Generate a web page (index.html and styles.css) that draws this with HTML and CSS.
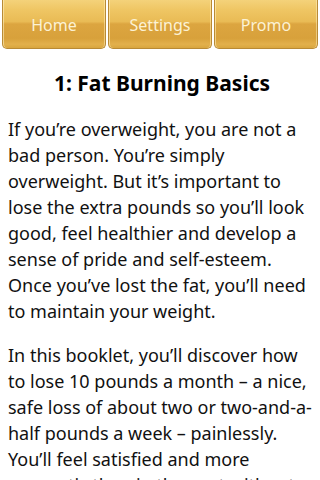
FILE: index.html
```html
<!DOCTYPE html>
<html>
<head>
<meta charset="utf-8">
<link rel="stylesheet" href="styles.css">
</head>
<body>
<nav class="tabs">
  <div class="tab">Home</div>
  <div class="tab">Settings</div>
  <div class="tab">Promo</div>
</nav>
<main class="content">
  <h1 class="title">1: Fat Burning Basics</h1>
  <p class="para">If you’re overweight, you are not a bad person. You’re simply overweight. But it’s important to lose the extra pounds so you’ll look good, feel healthier and develop a sense of pride and self-esteem. Once you’ve lost the fat, you’ll need to maintain your weight.</p>
  <p class="para">In this booklet, you’ll discover how to lose 10 pounds a month – a nice, safe loss of about two or two-and-a-&#8203;half pounds a week – painlessly. You’ll feel satisfied and more energetic than in the past without going hungry.</p>
</main>
</body>
</html>
```

FILE: styles.css
```css
html, body {
  margin: 0;
  padding: 0;
  background: #ffffff;
  overflow: hidden;
}
body {
  width: 320px;
  height: 480px;
  font-family: "Noto Sans", "Open Sans", sans-serif;
  color: #111111;
}
.tabs {
  display: flex;
  gap: 2px;
  padding: 0 2px;
  height: 49px;
}
.tab {
  flex: 1;
  display: flex;
  align-items: center;
  justify-content: center;
  font-size: 16px;
  color: #fcf2d4;
  border: 1px solid #b98a35;
  border-top: none;
  border-radius: 0 0 5px 5px;
  background: linear-gradient(to bottom, #f4d27a 0%, #efc664 20%, #e9bb55 45%, #dca540 50%, #d8a13b 80%, #e2b04c 92%, #d9a63f 100%);
  box-shadow: inset 1px 0 0 rgba(255,240,190,0.6), inset -1px 0 0 rgba(255,240,190,0.5);
  padding-top: 2px;
  box-sizing: border-box;
}
.content {
  padding: 0 4px 0 8px;
}
.title {
  margin: 20px 0 19px;
  font-size: 21px;
  line-height: 28px;
  font-weight: bold;
  text-align: center;
  color: #000000;
}
.para {
  margin: 18px 0;
  font-size: 18px;
  line-height: 26px;
}
```
